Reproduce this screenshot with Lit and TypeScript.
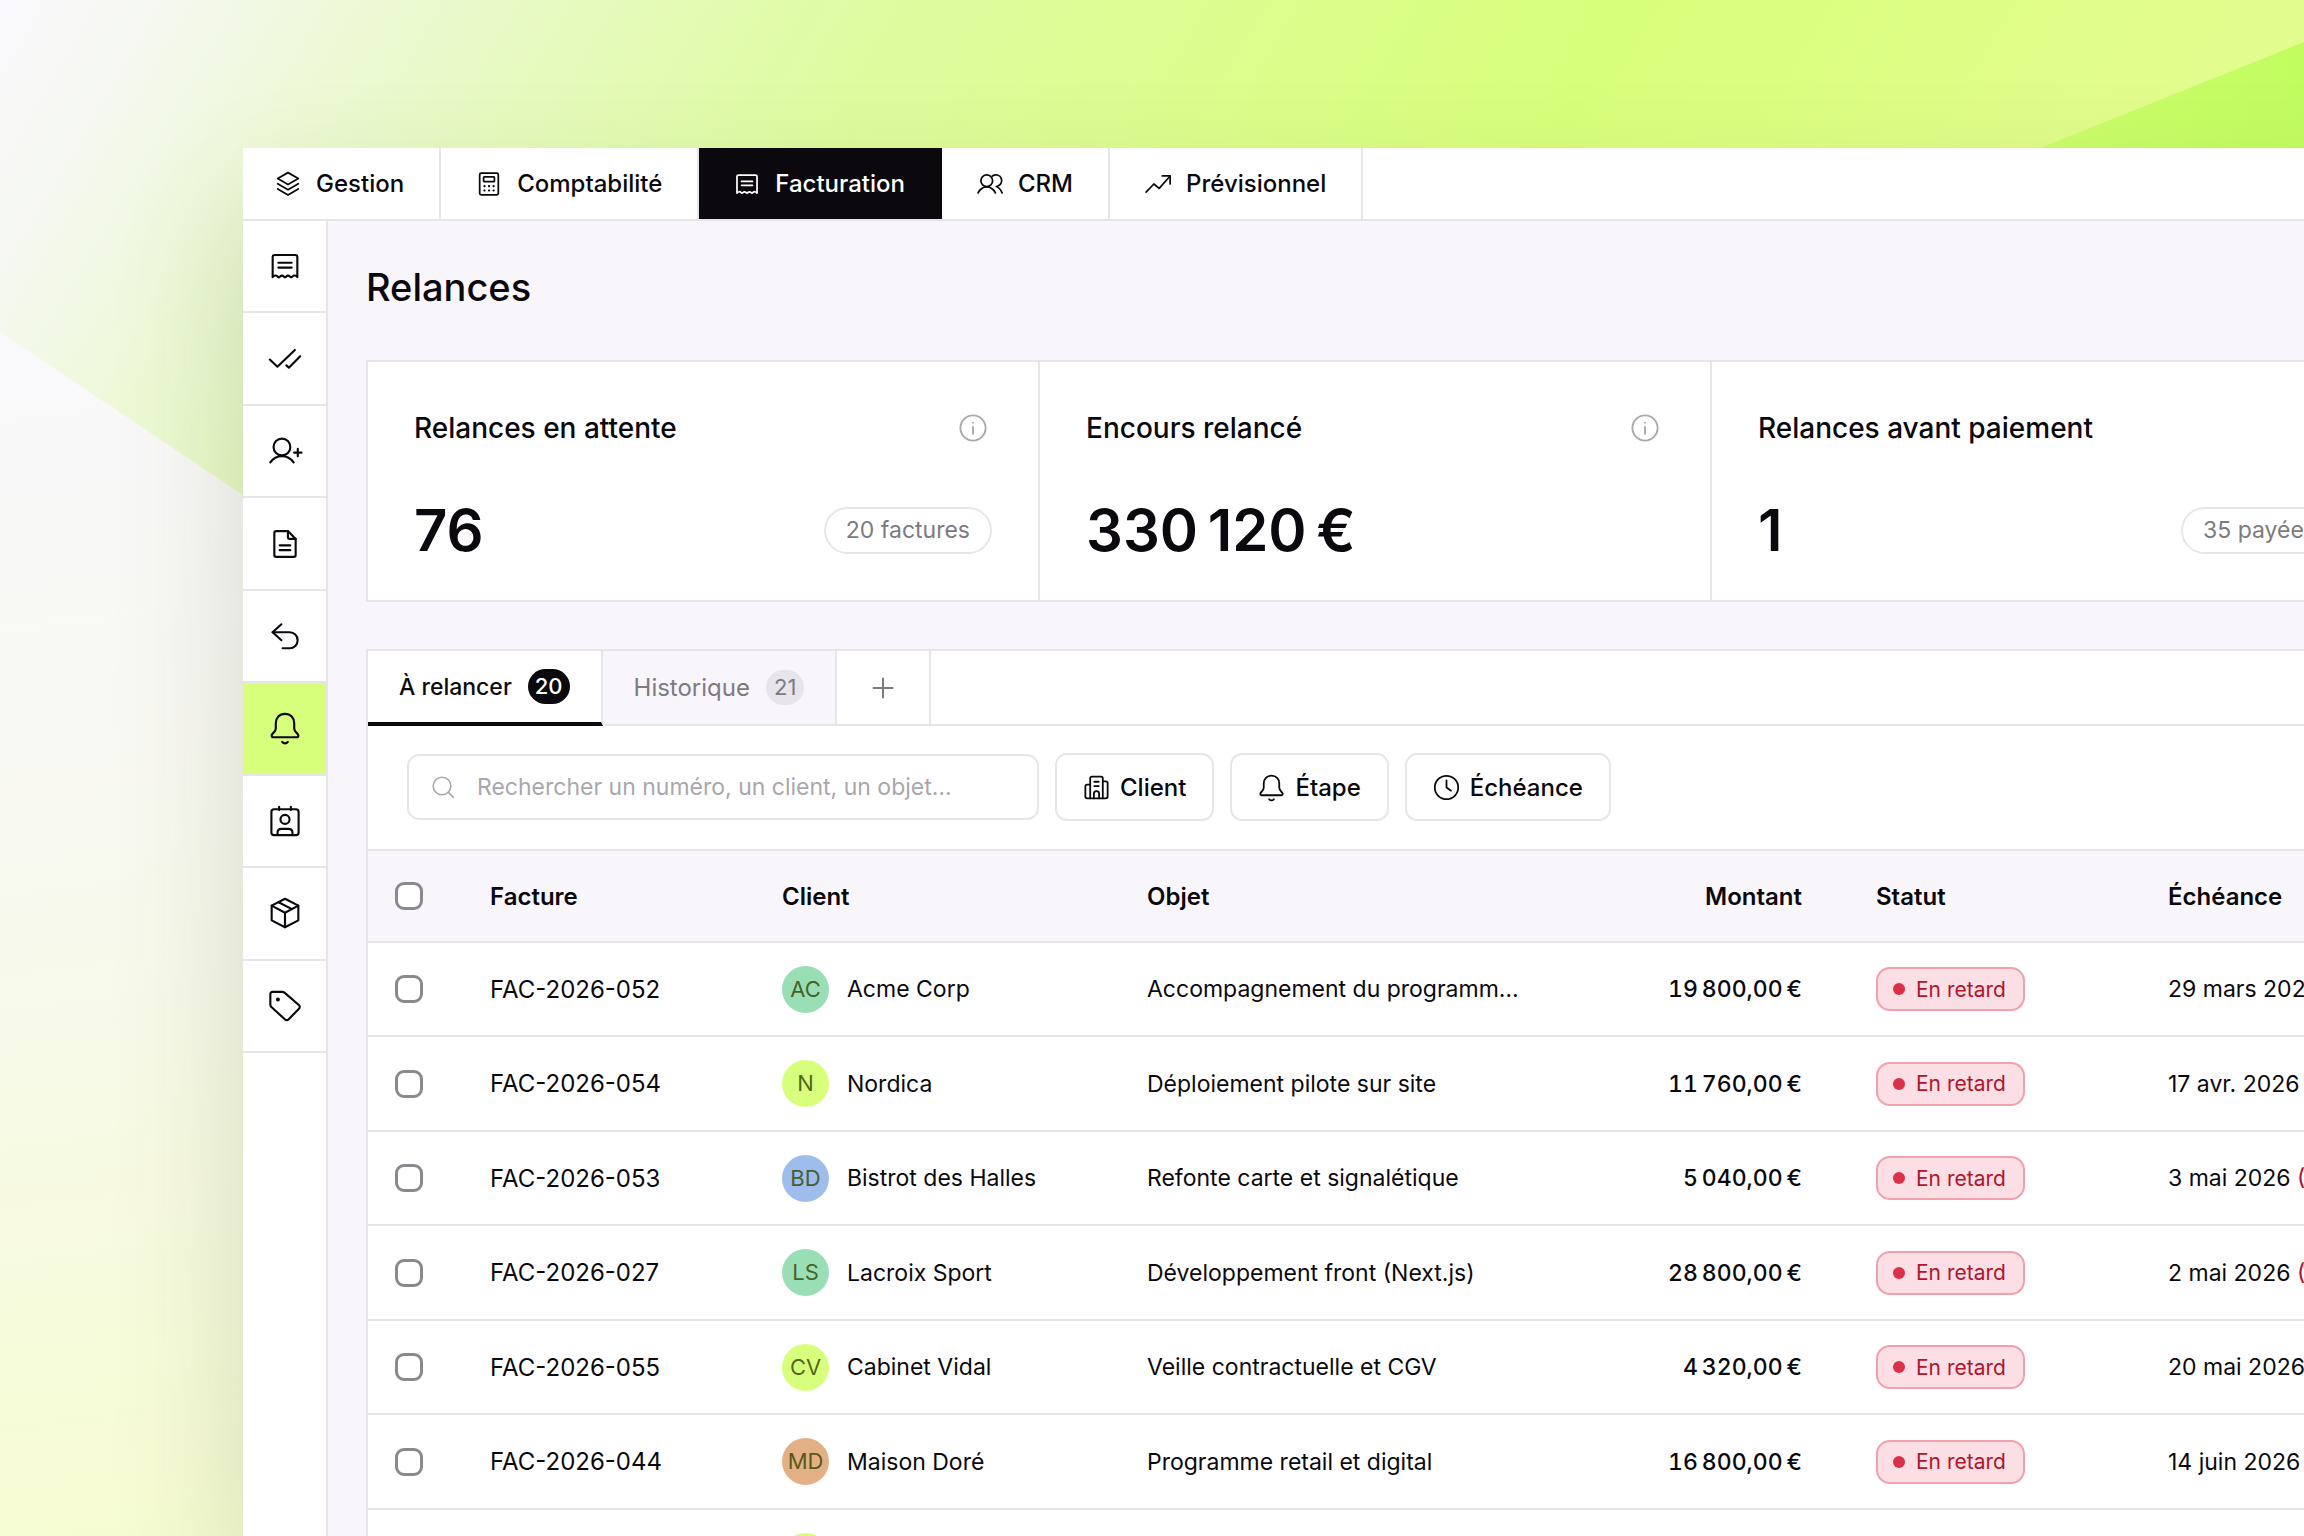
import { LitElement, html, css, svg, nothing } from "lit";
import type { SVGTemplateResult } from "lit";
import { customElement, property, state } from "lit/decorators.js";
import { classMap } from "lit/directives/class-map.js";

const ICONS: Record<string, SVGTemplateResult> = {
  layers: svg`<path d="M12 1.5 21.5 7 12 12.4 2.5 7z"/><path d="M2.5 11.8 12 17.2l9.5-5.4"/><path d="M2.5 16.6 12 22.2l9.5-5.6"/>`,
  calculator: svg`<rect x="3.4" y="2" width="17.2" height="20" rx="1.4"/><rect x="7" y="5.4" width="10" height="4.4" rx=".6"/><path d="M7.8 14h.1M12 14h.1M16.2 14h.1M7.8 18h.1M12 18h.1M16.2 18h.1" stroke-width="2"/>`,
  receipt: svg`<path d="M2.75 20.4V5.1c0-.8.6-1.35 1.4-1.35h15.7c.8 0 1.4.55 1.4 1.35v15.3c-1.3-1.6-2.6-1.6-3.9-.4-.5.5-1 .5-1.5 0-1.2-1.1-2-1.1-3.1 0-.5.5-1 .5-1.5 0-1.1-1.1-1.9-1.1-3.1 0-.5.5-1 .5-1.5 0-1.3-1.2-2.6-1.2-3.9.4z"/><path d="M7 9.6h10M7 13.2h10"/>`,
  users: svg`<circle cx="9" cy="9" r="5.4"/><path d="M1 20.2c1.7-3.4 4.5-5.6 8-5.6s6.3 2.2 8 5.6"/><path d="M14.2 4.6a5.4 5.4 0 1 1 3.6 9.7c2.4.8 4.2 3 5.4 5.9"/>`,
  trend: svg`<path d="M1 19.5 8.2 12l4.9 4L23 4.8"/><path d="M16 4.6h7.2v7.4"/>`,
  checks: svg`<path d="m.6 12.4 5.7 5.4L19.4 5.2"/><path d="m13 16.8 1.9 1.7 8.5-8.6"/>`,
  userAdd: svg`<circle cx="9.7" cy="9" r="6.3"/><path d="M1 20.6c2-3 5-4.8 8.7-4.8s6.7 1.8 8.8 4.8"/><path d="M18.8 13.2h5.6M21.6 10.4V16"/>`,
  file: svg`<path d="M14.2 2.3H5.4c-.8 0-1.4.6-1.4 1.4v16.6c0 .8.6 1.4 1.4 1.4h13.2c.8 0 1.4-.6 1.4-1.4V8.2z"/><path d="M14.2 2.3v4.9c0 .6.4 1 1 1H20M8 13h8M8 16.6h8"/>`,
  undo: svg`<path d="M9.3 3.2 2.7 9.2l6.6 6"/><path d="M2.7 9.2h12.8a6 6 0 0 1 0 12h-5.3"/>`,
  bell: svg`<path d="M12 1.4c-4.2 0-6.9 3-6.9 7v3.7c0 1.3-.6 2.3-1.5 3.2-1 .9-1.6 1.6-1.6 2.5 0 .7.5 1.1 1.2 1.1h17.6c.7 0 1.2-.4 1.2-1.1 0-.9-.6-1.6-1.6-2.5-.9-.9-1.5-1.9-1.5-3.2V8.4c0-4-2.7-7-6.9-7z"/><path d="M9.9 22.4c.5.7 1.2 1.1 2.1 1.1s1.6-.4 2.1-1.1"/>`,
  contact: svg`<rect x="1.8" y="3.2" width="20.4" height="19.4" rx="2"/><path d="M7.6 1.4v2.4M16.4 1.4v2.4"/><circle cx="12" cy="10.8" r="3.4"/><path d="M6.4 22.4v-1.6c0-1.8 1.2-2.9 3-2.9h5.2c1.8 0 3 1.1 3 2.9v1.6"/>`,
  cube: svg`<path d="M12 1.3 22 6.5v11L12 22.7 2 17.5v-11z"/><path d="m2 6.5 10 5.3 10-5.3M12 11.8v10.9M7.2 3.9l10 5.2"/>`,
  tag: svg`<path d="M2.6 1.4H10c.6 0 1.2.2 1.6.6l10.8 9.3c.9.8.9 1.9.1 2.7l-7.7 7.9c-.8.8-2 .8-2.9.1L1.8 12.8c-.5-.4-.8-1-.8-1.7V3c0-.9.7-1.6 1.6-1.6z"/><circle cx="6.7" cy="7.2" r=".7" fill="currentColor"/>`,
  building: svg`<path d="M6.4 21.6V3.9c0-.8.6-1.5 1.5-1.5h8.2c.9 0 1.5.7 1.5 1.5v17.7"/><path d="M6.4 9.4H3.7c-.9 0-1.6.7-1.6 1.6v9.1c0 .8.7 1.5 1.6 1.5h16.600c.9 0 1.6-.7 1.6-1.5V8.2c0-.9-.7-1.6-1.6-1.6h-2.7"/><path d="M10 6.9h4M10 10.7h4M9.7 21.6v-4.2c0-1.3 1-2.2 2.3-2.2s2.3.9 2.3 2.2v4.2"/>`,
  clock: svg`<circle cx="12" cy="12" r="10.4"/><path d="M12 5.6V12l4 2.8"/>`,
  search: svg`<circle cx="11" cy="11" r="8.8"/><path d="m17.4 17.4 5 5"/>`,
  info: svg`<circle cx="12" cy="12" r="10.8"/><path d="M12 11v6"/><path d="M12 7.4v.1"/>`,
  plus: svg`<path d="M12 2.500v19M2.500 12h19" stroke-width="2"/>`,
};

@customElement("ui-icon")
export class UiIcon extends LitElement {
  @property() name = "";
  static styles = css`
    :host { display: block; flex: none; width: 24px; height: 24px; }
    .glyph {
      display: block; width: 100%; height: 100%; overflow: visible;
      fill: none; stroke: currentColor; stroke-width: 1.6;
      stroke-linecap: round; stroke-linejoin: round;
    }
  `;
  render() {
    return html`<svg class="glyph" viewBox="0 0 24 24" aria-hidden="true">${ICONS[this.name] ?? nothing}</svg>`;
  }
}

interface Invoice {
  id: string;
  client: string;
  initials: string;
  tone: "green" | "lime" | "blue" | "orange";
  subject: string;
  amount: string;
  due: string;
  late?: string;
}

const MODULES = [
  ["layers", "Gestion"],
  ["calculator", "Comptabilité"],
  ["receipt", "Facturation"],
  ["users", "CRM"],
  ["trend", "Prévisionnel"],
];

const SECTIONS = [
  ["receipt", "Factures"],
  ["checks", "Validation"],
  ["userAdd", "Nouveau client"],
  ["file", "Documents"],
  ["undo", "Avoirs"],
  ["bell", "Relances"],
  ["contact", "Contacts"],
  ["cube", "Produits"],
  ["tag", "Étiquettes"],
];

const STATS = [
  { label: "Relances en attente", value: "76", note: "20 factures" },
  { label: "Encours relancé", value: "330\u202f120\u202f€", note: "" },
  { label: "Relances avant paiement", value: "1", note: "35 payées" },
];

const FILTERS = [
  ["building", "Client"],
  ["bell", "Étape"],
  ["clock", "Échéance"],
];

const INVOICES: Invoice[] = [
  { id: "FAC-2026-052", client: "Acme Corp", initials: "AC", tone: "green", subject: "Accompagnement du programm…", amount: "19\u202f800,00\u202f€", due: "29 mars 2026" },
  { id: "FAC-2026-054", client: "Nordica", initials: "N", tone: "lime", subject: "Déploiement pilote sur site", amount: "11\u202f760,00\u202f€", due: "17 avr. 2026" },
  { id: "FAC-2026-053", client: "Bistrot des Halles", initials: "BD", tone: "blue", subject: "Refonte carte et signalétique", amount: "5\u202f040,00\u202f€", due: "3 mai 2026", late: "(" },
  { id: "FAC-2026-027", client: "Lacroix Sport", initials: "LS", tone: "green", subject: "Développement front (Next.js)", amount: "28\u202f800,00\u202f€", due: "2 mai 2026", late: "(" },
  { id: "FAC-2026-055", client: "Cabinet Vidal", initials: "CV", tone: "lime", subject: "Veille contractuelle et CGV", amount: "4\u202f320,00\u202f€", due: "20 mai 2026" },
  { id: "FAC-2026-044", client: "Maison Doré", initials: "MD", tone: "orange", subject: "Programme retail et digital", amount: "16\u202f800,00\u202f€", due: "14 juin 2026" },
  { id: "", client: "", initials: "", tone: "lime", subject: "", amount: "", due: "" },
];

@customElement("app-root")
export class AppRoot extends LitElement {
  @state() private tab = 0;

  static styles = css`
    :host {
      --ink: #0b090d;
      --muted: #7d7b80;
      --faint: #a9a7ab;
      --line: #e7e5e9;
      --wash: #f8f6fa;
      --accent: #d8ff7b;
      display: block;
      font-family: Inter, "Liberation Sans", sans-serif;
      font-size: 24px;
      color: var(--ink);
    }
    * { box-sizing: border-box; }
    button, input { font: inherit; color: inherit; }
    button { background: none; border: 0; padding: 0; margin: 0; cursor: pointer; }
    a { color: inherit; text-decoration: none; }

    .page { position: relative; height: 100vh; overflow: hidden; display: flex; background: #f8f7f9; }
    .backdrop { position: absolute; inset: 0; width: 100%; height: 100%; }
    .window {
      position: relative; flex: 1; min-width: 0;
      display: flex; flex-direction: column;
      margin: 148px -122px 0 243px;
      background: #fff;
      box-shadow: 0 60px 120px rgba(80, 90, 50, 0.2);
    }

    .modules { display: flex; flex: none; height: 73px; border-bottom: 2px solid var(--line); }
    .module {
      display: flex; align-items: center; gap: 15px; padding: 0 35px;
      font-weight: 500; border-right: 2px solid var(--line);
    }
    .module:first-child { padding-left: 32px; }
    .module ui-icon { width: 26px; height: 26px; }
    .module.on { background: var(--ink); color: #fff; border-right-color: var(--ink); }

    .body { display: flex; flex: 1; min-height: 0; }
    .rail { flex: none; width: 85px; border-right: 2px solid var(--line); }
    .sections { display: grid; grid-template-rows: repeat(9, 1fr); height: 832px; }
    .section { display: flex; align-items: center; justify-content: center; border-bottom: 2px solid var(--line); }
    .section ui-icon { width: 32px; height: 32px; }
    .section.on { background: var(--accent); }

    .main { flex: 1; min-width: 0; padding: 42px 40px 0 38px; background: var(--wash); }
    .title { margin: 0 0 49px; font-size: 38px; line-height: 48px; font-weight: 500; }

    .stats {
      display: grid; grid-template-columns: repeat(3, 1fr);
      border: 2px solid var(--line); background: #fff; margin-bottom: 47px;
    }
    .stat { padding: 48px 46px 38px; border-right: 2px solid var(--line); }
    .stat:last-child { border-right: 0; }
    .stat-head, .stat-foot { display: flex; align-items: center; justify-content: space-between; }
    .stat-head { margin-bottom: 52px; padding-right: 5px; }
    .stat-label { margin: 0; font-size: 28px; line-height: 36px; font-weight: 500; }
    .stat-head ui-icon { width: 28px; height: 28px; color: var(--faint); }
    .stat-value { font-size: 58px; line-height: 64px; font-weight: 600; }
    .note {
      font-size: 23px; line-height: 43px; padding: 0 20px; color: var(--muted);
      border: 2px solid var(--line); border-radius: 24px;
    }

    .panel { background: #fff; border: 2px solid var(--line); border-bottom: 0; }
    .tabs { display: flex; height: 75px; }
    .tab {
      display: flex; align-items: center; gap: 16px; padding: 0 31px;
      color: var(--muted); background: var(--wash);
      border-right: 2px solid var(--line); border-bottom: 2px solid var(--line);
    }
    .tab.on { background: #fff; color: var(--ink); font-size: 23px; font-weight: 500; border-bottom: 4px solid var(--ink); }
    .pill { font-size: 22px; line-height: 35px; padding: 0 8px; border-radius: 18px; background: var(--line); }
    .tab.on .pill { padding: 0 7px; background: var(--ink); color: #fff; }
    .tab.add { padding: 0 34px; background: #fff; }
    .tab-rest { flex: 1; border-bottom: 2px solid var(--line); }

    .tools { display: flex; align-items: center; gap: 16px; padding: 27px 39px 28px; }
    .search {
      display: flex; align-items: center; gap: 22px; width: 632px; height: 66px; padding: 0 22px;
      border: 2px solid var(--line); border-radius: 12px; font-size: 23px; color: var(--faint);
    }
    .search input { flex: 1; min-width: 0; border: 0; outline: 0; padding: 0; background: none; color: var(--ink); }
    .search input::placeholder { color: var(--faint); opacity: 1; }
    .filter {
      display: flex; align-items: center; gap: 10px; height: 68px; padding: 0 26px;
      border: 2px solid var(--line); border-radius: 12px; font-weight: 500;
    }
    .filter ui-icon { width: 27px; height: 27px; }

    .grid { width: 100%; table-layout: fixed; border-collapse: separate; border-spacing: 0; }
    .c-check { width: 98px; }
    .c-mid { width: 292px; }
    .c-client { width: 365px; }
    .c-subject { width: 437px; }
    th, td { padding: 0 24px; text-align: left; white-space: nowrap; border-bottom: 2px solid var(--line); }
    th { height: 94px; font-size: 24px; font-weight: 600; background: var(--wash); border-top: 2px solid var(--line); }
    td { height: 94px; font-size: 23px; }
    tr:nth-child(even) td { height: 95px; }
    th:first-child, td:first-child { padding-left: 27px; }
    td.ref { font-size: 24px; }
    .amount { text-align: right; padding-right: 50px; }
    td.amount { font-weight: 500; font-variant-numeric: tabular-nums; }
    .check {
      display: block; appearance: none; width: 28px; height: 28px; margin: 0;
      border: 3px solid #8b898d; border-radius: 9px; background: #fff;
    }
    .check:checked { background: var(--ink); }
    .client { display: flex; align-items: center; gap: 18px; }
    .avatar {
      width: 47px; height: 47px; border-radius: 50%; font-size: 22px; line-height: 47px;
      text-align: center; color: rgba(50, 70, 0, 0.82);
    }
    .green { background: #9adeb6; }
    .lime { background: #d8ff7b; }
    .blue { background: #9fbdec; }
    .orange { background: #e3b085; }
    .status {
      display: inline-flex; align-items: center; gap: 11px; height: 44px; padding: 0 17px 0 15px;
      font-size: 21px; color: #b3142b; background: #fbdfe5; border: 2px solid #f2a0ae; border-radius: 14px;
      vertical-align: middle;
    }
    .dot { width: 12px; height: 12px; border-radius: 50%; background: #dc3048; }
    .late { color: #b3142b; }
  `;

  private backdrop() {
    return html`
      <svg class="backdrop" viewBox="0 0 2304 1536" preserveAspectRatio="none" aria-hidden="true">
        <defs>
          <linearGradient id="sky" gradientUnits="userSpaceOnUse" x1="0" y1="0" x2="1690" y2="988">
            <stop offset="0" stop-color="#faf8fd" />
            <stop offset=".07" stop-color="#f6f8f1" />
            <stop offset=".16" stop-color="#edf9d6" />
            <stop offset=".26" stop-color="#e6fabd" />
            <stop offset=".4" stop-color="#defc9f" />
            <stop offset=".72" stop-color="#d8ff7b" />
            <stop offset="1" stop-color="#e3fc8e" />
          </linearGradient>
          <linearGradient id="ground" gradientUnits="userSpaceOnUse" x1="0" y1="400" x2="140" y2="1536">
            <stop offset="0" stop-color="#f9f8fa" />
            <stop offset=".4" stop-color="#f8f9f0" />
            <stop offset="1" stop-color="#f6fcd2" />
          </linearGradient>
          <linearGradient id="ray" gradientUnits="userSpaceOnUse" x1="2040" y1="148" x2="2304" y2="100">
            <stop offset="0" stop-color="#cdfd6c" />
            <stop offset="1" stop-color="#c2fd60" />
          </linearGradient>
        </defs>
        <rect width="2304" height="1536" fill="url(#sky)" />
        <path d="M0 332 243 495 700 800V1536H0z" fill="url(#ground)" />
        <path d="M2040 148 2304 42V200H2040z" fill="url(#ray)" />
      </svg>
    `;
  }

  private row(inv: Invoice) {
    return html`
      <tr>
        <td><input class="check" type="checkbox" aria-label=${`Sélectionner ${inv.id}`} /></td>
        <td class="ref">${inv.id}</td>
        <td>
          <div class="client"><span class="avatar ${inv.tone}">${inv.initials}</span>${inv.client}</div>
        </td>
        <td>${inv.subject}</td>
        <td class="amount">${inv.amount}</td>
        <td>${inv.id ? html`<span class="status"><span class="dot"></span>En retard</span>` : nothing}</td>
        <td>${inv.due} ${inv.late ? html`<span class="late">${inv.late}</span>` : nothing}</td>
      </tr>
    `;
  }

  render() {
    return html`
      <div class="page">
        ${this.backdrop()}
        <div class="window">
          <nav class="modules">
            ${MODULES.map(
              ([icon, label]) => html`
                <a href="#" class=${classMap({ module: true, on: label === "Facturation" })}>
                  <ui-icon name=${icon}></ui-icon>${label}
                </a>
              `,
            )}
          </nav>
          <div class="body">
            <aside class="rail">
              <nav class="sections">
                ${SECTIONS.map(
                  ([icon, label]) => html`
                    <a href="#" aria-label=${label} class=${classMap({ section: true, on: icon === "bell" })}>
                      <ui-icon name=${icon}></ui-icon>
                    </a>
                  `,
                )}
              </nav>
            </aside>
            <main class="main">
              <h1 class="title">Relances</h1>
              <section class="stats">
                ${STATS.map(
                  (s) => html`
                    <article class="stat">
                      <div class="stat-head">
                        <h2 class="stat-label">${s.label}</h2>
                        <ui-icon name="info"></ui-icon>
                      </div>
                      <div class="stat-foot">
                        <span class="stat-value">${s.value}</span>
                        ${s.note ? html`<span class="note">${s.note}</span>` : nothing}
                      </div>
                    </article>
                  `,
                )}
              </section>
              <section class="panel">
                <div class="tabs" role="tablist">
                  ${[["À relancer", "20"], ["Historique", "21"]].map(
                    ([label, count], i) => html`
                      <button
                        role="tab"
                        aria-selected=${this.tab === i ? "true" : "false"}
                        class=${classMap({ tab: true, on: this.tab === i })}
                        @click=${() => (this.tab = i)}
                      >
                        ${label}<span class="pill">${count}</span>
                      </button>
                    `,
                  )}
                  <button class="tab add" aria-label="Ajouter une vue"><ui-icon name="plus"></ui-icon></button>
                  <div class="tab-rest"></div>
                </div>
                <div class="tools">
                  <label class="search">
                    <ui-icon name="search"></ui-icon>
                    <input type="text" aria-label="Rechercher" placeholder="Rechercher un numéro, un client, un objet…" />
                  </label>
                  ${FILTERS.map(
                    ([icon, label]) => html`<button class="filter"><ui-icon name=${icon}></ui-icon>${label}</button>`,
                  )}
                </div>
                <table class="grid">
                  <colgroup>
                    <col class="c-check" /><col class="c-mid" /><col class="c-client" /><col class="c-subject" />
                    <col class="c-mid" /><col class="c-mid" /><col />
                  </colgroup>
                  <thead>
                    <tr>
                      <th><input class="check" type="checkbox" aria-label="Tout sélectionner" /></th>
                      <th>Facture</th>
                      <th>Client</th>
                      <th>Objet</th>
                      <th class="amount">Montant</th>
                      <th>Statut</th>
                      <th>Échéance</th>
                    </tr>
                  </thead>
                  <tbody>
                    ${INVOICES.map((inv) => this.row(inv))}
                  </tbody>
                </table>
              </section>
            </main>
          </div>
        </div>
      </div>
    `;
  }
}
